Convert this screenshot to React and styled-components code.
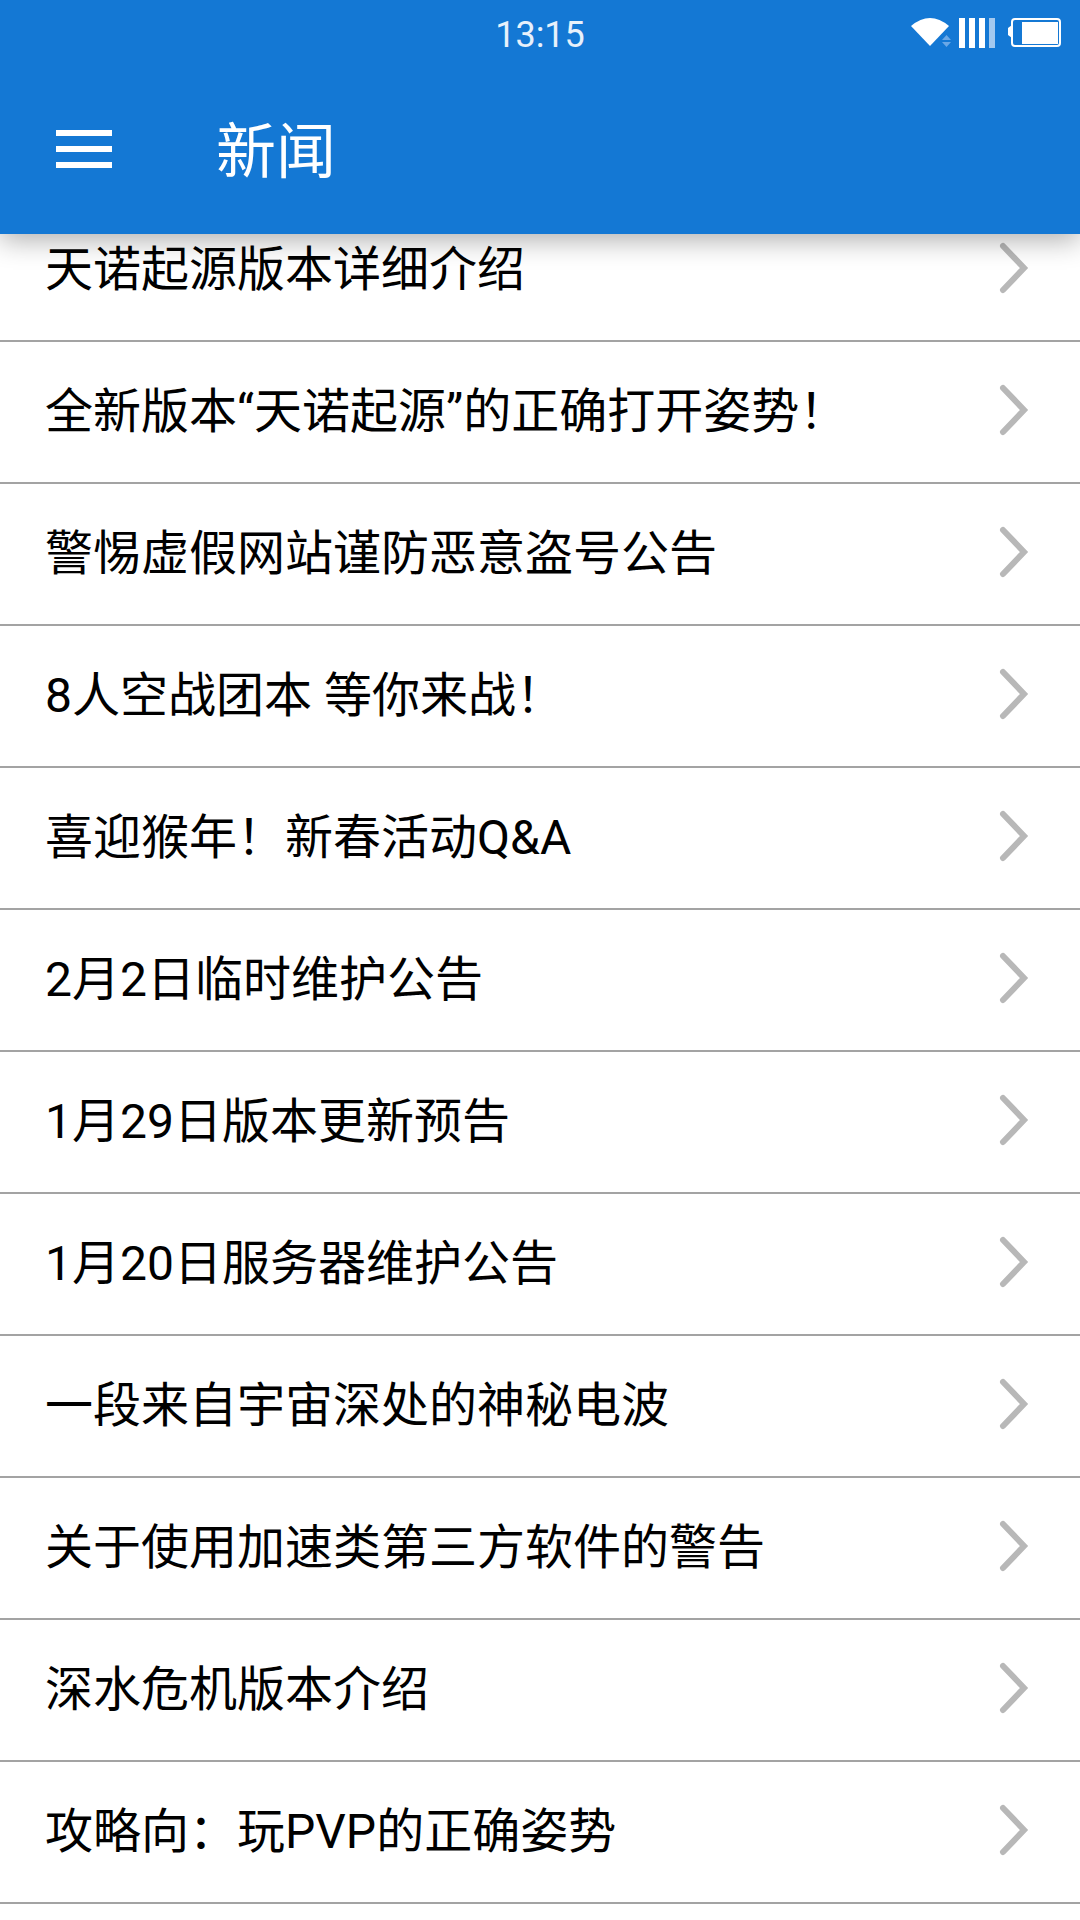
import React from 'react';
import styled, { createGlobalStyle } from 'styled-components';

const GlobalStyle = createGlobalStyle`
    html, body {
        margin: 0;
        padding: 0;
        background: #fff;
    }
    body {
        font-family: Roboto, "Noto Sans CJK SC", sans-serif;
    }
`;

const Page = styled.div`
    width: 1080px;
    height: 1920px;
    overflow: hidden;
    background: #fff;
`;

const Header = styled.header`
    position: relative;
    z-index: 2;
    height: 234px;
    background: #1478d4;
    box-shadow: 0 6px 26px rgba(0, 0, 0, 0.32);
    color: #fff;
`;

const StatusBar = styled.div`
    position: relative;
    display: flex;
    justify-content: center;
    align-items: center;
    height: 70px;
`;

const Clock = styled.span`
    font-family: Roboto, sans-serif;
    font-size: 36px;
    color: #e8f1fb;
`;

const StatusIcons = styled.div`
    position: absolute;
    top: 18px;
    right: 19px;
    display: flex;
    align-items: flex-start;
`;

const Wifi = styled.svg`
    width: 42px;
    height: 30px;
    margin-right: 6px;
`;

const Signal = styled.svg`
    width: 36px;
    height: 30px;
    margin-right: 12px;
`;

const Battery = styled.svg`
    width: 54px;
    height: 30px;
`;

const Toolbar = styled.div`
    display: flex;
    align-items: center;
    height: 164px;
    padding-left: 56px;
`;

const MenuLines = styled.div`
    display: flex;
    flex-direction: column;
    gap: 10px;
    width: 56px;
    margin-right: 104px;
    margin-top: -6px;
`;

const MenuLine = styled.span`
    height: 6px;
    background: #fff;
`;

const Title = styled.h1`
    margin: 1px 0 0;
    font-size: 60px;
    font-weight: 400;
    line-height: 1;
`;

const List = styled.div`
    margin-top: -34px;
`;

const Row = styled.div`
    display: flex;
    align-items: center;
    justify-content: space-between;
    box-sizing: border-box;
    height: 142px;
    padding: 0 50px 0 45px;
    border-bottom: 2px solid #a3a3a3;
`;

const RowText = styled.span`
    font-size: 48px;
    line-height: 1;
    color: #000;
`;

const Chevron = styled.svg`
    width: 32px;
    height: 54px;
    flex: none;
    margin-bottom: 5px;
`;

const rows = [
    '天诺起源版本详细介绍',
    '全新版本“天诺起源”的正确打开姿势！',
    '警惕虚假网站谨防恶意盗号公告',
    '8人空战团本 等你来战！',
    '喜迎猴年！新春活动Q&A',
    '2月2日临时维护公告',
    '1月29日版本更新预告',
    '1月20日服务器维护公告',
    '一段来自宇宙深处的神秘电波',
    '关于使用加速类第三方软件的警告',
    '深水危机版本介绍',
    '攻略向：玩PVP的正确姿势',
];

function StatusGlyphs() {
    return (
        <StatusIcons>
            <Wifi viewBox="0 0 42 30">
                <path d="M0 8 Q19 -8 38 8 L19 28 Z" fill="#fff" />
                <path d="M31 22 L35.5 17 L40 22 Z M31 24 H40 L35.5 29 Z" fill="#6ba8e6" />
            </Wifi>
            <Signal viewBox="0 0 36 30">
                <rect x="0" y="0" width="6" height="30" fill="#fff" />
                <rect x="10" y="0" width="6" height="30" fill="#fff" />
                <rect x="20" y="0" width="6" height="30" fill="#fff" />
                <rect x="30" y="0" width="6" height="30" fill="#a4c9ef" />
            </Signal>
            <Battery viewBox="0 0 54 30">
                <path d="M5 7 L1 10 V17 L5 20 Z" fill="#fff" />
                <rect x="5" y="1" width="48" height="27" rx="3" fill="none" stroke="#fff" strokeWidth="2" />
                <rect x="15" y="4" width="36" height="22" fill="#fff" />
            </Battery>
        </StatusIcons>
    );
}

export default function App() {
    return (
        <Page>
            <GlobalStyle />
            <Header>
                <StatusBar>
                    <Clock>13:15</Clock>
                    <StatusGlyphs />
                </StatusBar>
                <Toolbar>
                    <MenuLines>
                        <MenuLine />
                        <MenuLine />
                        <MenuLine />
                    </MenuLines>
                    <Title>新闻</Title>
                </Toolbar>
            </Header>
            <List>
                {rows.map(text => (
                    <Row key={text}>
                        <RowText>{text}</RowText>
                        <Chevron viewBox="0 0 32 54">
                            <path d="M5 5 L26 27 L5 49" fill="none" stroke="#b8b8b8" strokeWidth="6" strokeLinecap="round" strokeLinejoin="miter" />
                        </Chevron>
                    </Row>
                ))}
            </List>
        </Page>
    );
}
